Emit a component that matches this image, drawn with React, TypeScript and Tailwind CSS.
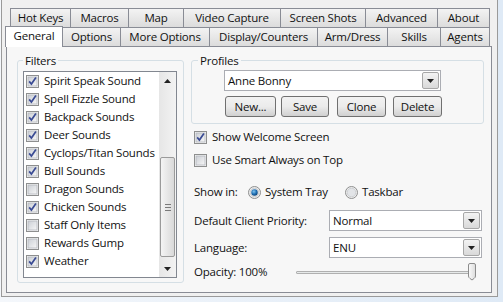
import React from "react";

const row1 = [
  { label: "Hot Keys", w: 60 },
  { label: "Macros", w: 58 },
  { label: "Map", w: 55 },
  { label: "Video Capture", w: 97 },
  { label: "Screen Shots", w: 85 },
  { label: "Advanced", w: 72 },
  { label: "About", w: 53 },
];

const row2 = [
  { label: "General", w: 58, active: true },
  { label: "Options", w: 57 },
  { label: "More Options", w: 89 },
  { label: "Display/Counters", w: 108 },
  { label: "Arm/Dress", w: 70 },
  { label: "Skills", w: 53 },
  { label: "Agents", w: 50 },
];

const filters = [
  { label: "Spirit Speak Sound", on: true },
  { label: "Spell Fizzle Sound", on: true },
  { label: "Backpack Sounds", on: true },
  { label: "Deer Sounds", on: true },
  { label: "Cyclops/Titan Sounds", on: true },
  { label: "Bull Sounds", on: true },
  { label: "Dragon Sounds", on: false },
  { label: "Chicken Sounds", on: true },
  { label: "Staff Only Items", on: false },
  { label: "Rewards Gump", on: false },
  { label: "Weather", on: true },
];

function Check({ on }: { on?: boolean }) {
  return (
    <svg width="13" height="13" viewBox="0 0 13 13" className="shrink-0">
      <defs>
        <linearGradient id="cbx" x1="0" y1="0" x2="1" y2="1">
          <stop offset="0" stopColor="#cbcfd5" />
          <stop offset="1" stopColor="#f7f7f7" />
        </linearGradient>
      </defs>
      <rect x="0.5" y="0.5" width="12" height="12" fill="#f6f6f6" stroke="#8e8f8f" />
      <rect x="2" y="2" width="9" height="9" fill="url(#cbx)" stroke="#b3b7bd" strokeWidth="0.8" />
      {on && <path d="M3.2 6.4 L5.4 9 L9.9 2.6" fill="none" stroke="#3a4b94" strokeWidth="1.7" />}
    </svg>
  );
}

function Radio({ on }: { on?: boolean }) {
  return (
    <svg width="13" height="13" viewBox="0 0 13 13" className="shrink-0">
      <defs>
        <radialGradient id="rdot" cx="0.4" cy="0.35" r="0.7">
          <stop offset="0" stopColor="#7fc4f0" />
          <stop offset="0.6" stopColor="#1b6bb0" />
          <stop offset="1" stopColor="#0d3f70" />
        </radialGradient>
      </defs>
      <circle cx="6.5" cy="6.5" r="6" fill="#eeeeee" stroke="#8e8f8f" />
      <circle cx="6.5" cy="6.5" r="4.3" fill="#e2e4e7" stroke="#c5c8cc" strokeWidth="0.8" />
      {on && <circle cx="6.5" cy="6.5" r="3.2" fill="url(#rdot)" />}
    </svg>
  );
}

function Arrow({ up }: { up?: boolean }) {
  return (
    <svg width="7" height="4" viewBox="0 0 7 4">
      <path d={up ? "M0 4 L3.5 0 L7 4 Z" : "M0 0 L7 0 L3.5 4 Z"} fill="#222" />
    </svg>
  );
}

function Combo({ value, w }: { value: string; w: number }) {
  return (
    <div className="flex h-[21px] border border-[#abadb3] bg-white" style={{ width: w }}>
      <span className="flex-1 pl-[3px] leading-[19px]">{value}</span>
      <div className="w-[17px] m-[1px] border border-[#a7a7a7] rounded-[2px] bg-gradient-to-b from-[#f3f3f3] to-[#d9d9d9] flex items-center justify-center">
        <Arrow />
      </div>
    </div>
  );
}

function Btn({ label, w, ml }: { label: string; w: number; ml: number }) {
  return (
    <div
      className="h-[21px] rounded-[3px] border border-[#707070] bg-gradient-to-b from-[#f2f2f2] via-[#ebebeb] to-[#d0d0d0] flex items-center justify-center"
      style={{ width: w, marginLeft: ml }}
    >
      {label}
    </div>
  );
}

export default function App() {
  return (
    <div className="w-[503px] h-[302px] overflow-hidden bg-gradient-to-r from-[#f4f7fb] to-[#dfeaf6] text-[11.5px] text-[#111] font-['Open_Sans','Noto_Sans',sans-serif] tracking-[-0.2px]">
      <div className="ml-[1px] w-[497px] h-[297px] border-x border-b border-[#9a9a9a] bg-[#f0f0f0] pt-[8px]">
        {/* top tab row */}
        <div className="flex ml-[8px] h-[19px]">
          {row1.map((t, i) => (
            <div
              key={t.label}
              className={`h-[19px] border-t border-l border-[#898c95] bg-gradient-to-b from-[#f3f3f3] to-[#dcdcdc] flex items-center justify-center leading-none ${i === row1.length - 1 ? "border-r" : ""}`}
              style={{ width: t.w }}
            >
              {t.label}
            </div>
          ))}
        </div>
        {/* second tab row */}
        <div className="flex ml-[3px] h-[19px]">
          {row2.map((t, i) =>
            t.active ? (
              <div
                key={t.label}
                className="relative z-10 h-[21px] -mt-[1px] border-t border-l border-r border-[#898c95] bg-white flex items-center justify-center pb-[2px]"
                style={{ width: t.w }}
              >
                {t.label}
              </div>
            ) : (
              <div
                key={t.label}
                className={`h-[19px] border-t border-[#898c95] bg-gradient-to-b from-[#f3f3f3] to-[#dcdcdc] flex items-center justify-center ${i === 1 ? "" : "border-l"} ${i === row2.length - 1 ? "border-r" : ""}`}
                style={{ width: t.w }}
              >
                {t.label}
              </div>
            )
          )}
        </div>
        {/* page */}
        <div className="ml-[4px] w-[486px] h-[247px] border border-[#898c95] bg-[#f7f7f7] pt-[6px] pl-[10px] flex gap-[7px]">
          {/* Filters */}
          <fieldset className="w-[167px] h-[230px] border border-[#d5dfe5] rounded-[3px] px-[5px]">
            <legend className="px-[2px] leading-[15px]">Filters</legend>
            <div className="mt-[3px] w-[154px] h-[207px] border border-[#828790] bg-white flex">
              <div className="flex-1 flex flex-col">
                {filters.map((f) => (
                  <div key={f.label} className="h-[18px] flex items-center pl-[2px] gap-[5px] whitespace-nowrap">
                    <Check on={f.on} />
                    <span>{f.label}</span>
                  </div>
                ))}
              </div>
              <div className="w-[17px] bg-gradient-to-r from-[#e6e6e6] to-[#f3f3f3] flex flex-col">
                <div className="h-[17px] flex items-center justify-center"><Arrow up /></div>
                <div className="h-[68px]" />
                <div className="mx-[1px] h-[100px] rounded-[2px] border border-[#9a9a9a] bg-gradient-to-r from-[#f4f4f4] to-[#d9d9d9] flex flex-col items-center justify-center gap-[2px]">
                  <div className="w-[6px] h-[1px] bg-[#7a7a7a]" />
                  <div className="w-[6px] h-[1px] bg-[#7a7a7a]" />
                  <div className="w-[6px] h-[1px] bg-[#7a7a7a]" />
                </div>
                <div className="flex-1" />
                <div className="h-[17px] flex items-center justify-center"><Arrow /></div>
              </div>
            </div>
          </fieldset>

          {/* right column */}
          <div className="flex flex-col">
            <fieldset className="w-[293px] h-[71px] border border-[#d5dfe5] rounded-[3px]">
              <legend className="ml-[6px] px-[2px] leading-[15px]">Profiles</legend>
              <div className="mt-[2px] ml-[32px]">
                <Combo value="Anne Bonny" w={217} />
              </div>
              <div className="flex mt-[5px] ml-[32px]">
                <Btn label="New..." w={51} ml={1} />
                <Btn label="Save" w={48} ml={5} />
                <Btn label="Clone" w={49} ml={8} />
                <Btn label="Delete" w={49} ml={7} />
              </div>
            </fieldset>

            <div className="pl-[3px] flex flex-col">
              <div className="mt-[4px] h-[18px] flex items-center gap-[5px]">
                <Check on />
                <span>Show Welcome Screen</span>
              </div>
              <div className="mt-[5px] h-[18px] flex items-center gap-[5px]">
                <Check />
                <span>Use Smart Always on Top</span>
              </div>
              <div className="mt-[14px] h-[18px] flex items-center">
                <span className="w-[54px]">Show in:</span>
                <Radio on />
                <span className="ml-[4px] w-[80px]">System Tray</span>
                <Radio />
                <span className="ml-[4px]">Taskbar</span>
              </div>
              <div className="mt-[9px] flex items-center">
                <span className="w-[135px]">Default Client Priority:</span>
                <Combo value="Normal" w={153} />
              </div>
              <div className="mt-[6px] flex items-center">
                <span className="w-[135px]">Language:</span>
                <Combo value="ENU" w={153} />
              </div>
              <div className="mt-[5px] h-[18px] flex items-center">
                <span className="w-[102px]">Opacity: 100%</span>
                <div className="relative w-[180px] h-[18px] flex items-center">
                  <div className="w-[176px] h-[3px] border border-[#b0b0b0] bg-[#e7eaea] rounded-[1px]" />
                  <svg className="absolute left-[171px] top-0" width="10" height="18" viewBox="0 0 10 18">
                    <defs>
                      <linearGradient id="thb" x1="0" y1="0" x2="1" y2="0">
                        <stop offset="0" stopColor="#fbfbfb" />
                        <stop offset="1" stopColor="#dcdcdc" />
                      </linearGradient>
                    </defs>
                    <path d="M1.5 2 Q1.5 0.5 3 0.5 L7 0.5 Q8.5 0.5 8.5 2 L8.5 13 Q8.5 14.5 7 15.5 L5 17 L3 15.5 Q1.5 14.5 1.5 13 Z" fill="url(#thb)" stroke="#8c8c8c" />
                  </svg>
                </div>
              </div>
            </div>
          </div>
        </div>
      </div>
    </div>
  );
}
